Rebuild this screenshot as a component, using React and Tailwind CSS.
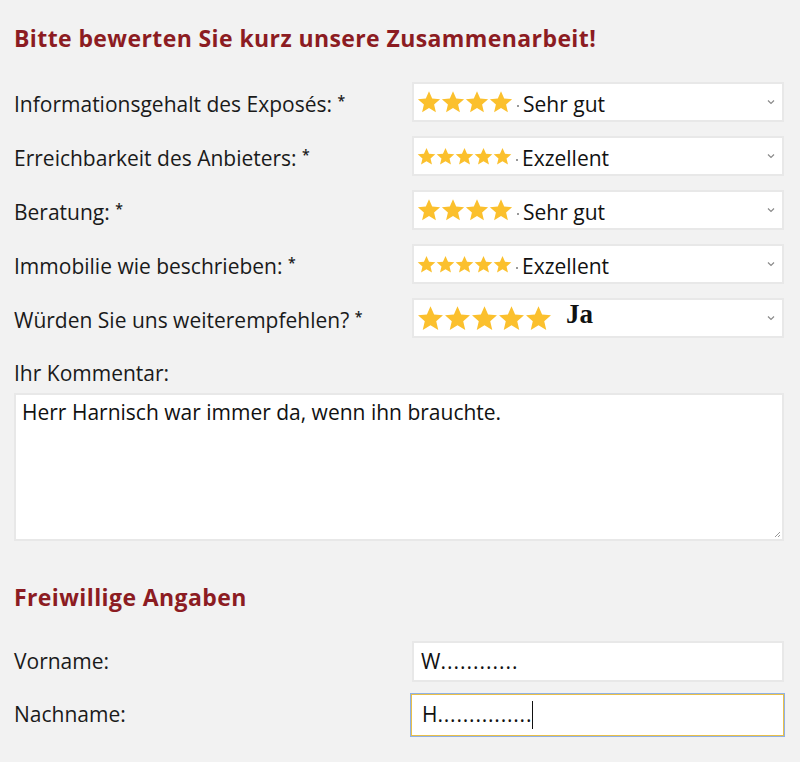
import React from 'react';

const FONT = { fontFamily: '"Open Sans", "Noto Sans", sans-serif' };

function Star({ size }) {
  return (
    <svg width={size} height={size} viewBox="0 0 24 24" className="shrink-0">
      <path d="M12 1.2l3.2 7.3 7.9.7-6 5.2 1.8 7.8L12 18.1l-6.9 4.1 1.8-7.8-6-5.2 7.9-.7z" fill="#fbc02d" />
    </svg>
  );
}

function Chevron() {
  return (
    <svg width="8" height="5" viewBox="0 0 8 5" className="absolute right-[7px] top-1/2 -translate-y-1/2">
      <path d="M1 1l3 3 3-3" stroke="#8a8a8a" strokeWidth="1.2" fill="none" />
    </svg>
  );
}

const RATINGS = [
  { label: 'Informationsgehalt des Exposés:', stars: 4, size: 24, text: 'Sehr gut' },
  { label: 'Erreichbarkeit des Anbieters:', stars: 5, size: 19, text: 'Exzellent' },
  { label: 'Beratung:', stars: 4, size: 24, text: 'Sehr gut' },
  { label: 'Immobilie wie beschrieben:', stars: 5, size: 19, text: 'Exzellent' },
  { label: 'Würden Sie uns weiterempfehlen?', stars: 5, size: 27, text: 'Ja', serif: true },
];

function RatingRow({ r }) {
  return (
    <div className="flex items-center h-[40px]">
      <div className="w-[398px] text-[21px] text-[#1a1a1a] leading-[28px]">
        {r.label} <span className="text-[14px] font-semibold align-[6px]">*</span>
      </div>
      <div className="relative flex items-center flex-1 h-full bg-white border-2 border-[#e8e8e8] pl-[3px]">
        <div className="flex items-center">
          {Array.from({ length: r.stars }).map((_, i) => <Star key={i} size={r.size} />)}
        </div>
        {r.serif ? (
          <span className="relative -top-[4px] ml-[14px] text-[27px] leading-[32px] font-bold text-[#111]" style={{ fontFamily: '"Liberation Serif", serif' }}>Ja</span>
        ) : (
          <>
            <span className="ml-[4px] w-[2px] h-[2px] bg-[#999] self-end mb-[13px]" />
            <span className="relative top-[3px] ml-[4px] text-[21px] text-[#111]">{r.text}</span>
          </>
        )}
        <Chevron />
      </div>
    </div>
  );
}

export default function App() {
  return (
    <div className="min-h-[762px] bg-[#f2f2f2] pl-[14px] pr-[16px] pt-[22px]" style={FONT}>
      <h2 className="text-[23px] font-bold text-[#8c1c22] leading-[32px] tracking-[0.4px]">Bitte bewerten Sie kurz unsere Zusammenarbeit!</h2>

      <div className="flex flex-col gap-[14px] mt-[28px]">
        {RATINGS.map(r => <RatingRow key={r.label} r={r} />)}
      </div>

      <div className="mt-[22px] text-[21px] text-[#1a1a1a] leading-[26px]">Ihr Kommentar:</div>
      <div className="relative mt-[7px] h-[148px] bg-white border-2 border-[#e8e8e8] px-[6px] py-[2px] text-[21px] text-[#111]">
        Herr Harnisch war immer da, wenn ihn brauchte.
        <svg width="7" height="7" viewBox="0 0 7 7" className="absolute right-[1px] bottom-[1px]">
          <path d="M6 1L1 6M6 4L4 6" stroke="#999" strokeWidth="1" />
        </svg>
      </div>

      <h2 className="mt-[40px] text-[23px] font-bold text-[#8c1c22] leading-[32px] tracking-[0.4px]">Freiwillige Angaben</h2>

      <div className="flex items-center h-[41px] mt-[28px]">
        <div className="w-[398px] text-[21px] text-[#1a1a1a]">Vorname:</div>
        <div className="flex items-center flex-1 h-full bg-white border-2 border-[#e8e8e8] pl-[7px] text-[21px] text-[#111]">
          W<span className="tracking-[1px]">............</span>
        </div>
      </div>
      <div className="flex items-center h-[42px] mt-[12px]">
        <div className="w-[397px] text-[21px] text-[#1a1a1a]">Nachname:</div>
        <div className="flex items-center flex-1 h-full bg-white border border-[#e9c04a] shadow-[0_0_0_1px_#8fb1e6] pl-[10px] text-[21px] text-[#111]">
          H<span className="tracking-[0.8px]">...............</span>
          <span className="w-[1px] h-[28px] bg-[#111]" />
        </div>
      </div>
    </div>
  );
}
